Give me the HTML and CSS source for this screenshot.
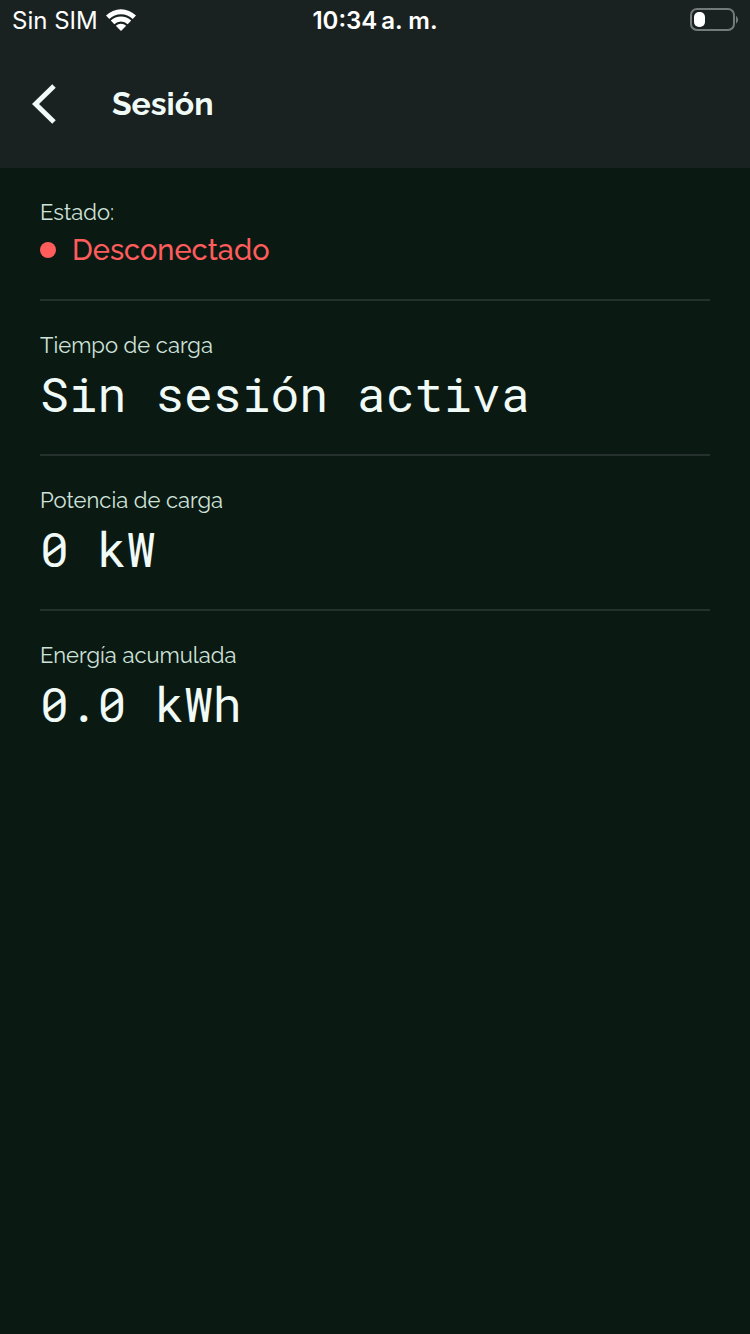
FILE: index.html
```html
<!DOCTYPE html>
<html lang="es">
<head>
  <meta charset="UTF-8">
  <meta name="viewport" content="width=device-width, initial-scale=1">
  <title>Sesión</title>
  <link rel="stylesheet" href="styles.css">
</head>
<body>
<header class="top">
  <div class="status-bar">
    <div class="carrier">
      <span>Sin SIM</span>
      <svg class="wifi" viewBox="0 0 30 22" aria-hidden="true">
        <path d="M0 6.400a21.500 21.500 0 0 1 30 0l-3.300 3.600a17 17 0 0 0-23.400 0z"/>
        <path d="M4.800 11.600a14.600 14.600 0 0 1 20.400 0l-3.500 3.600a9.700 9.700 0 0 0-13.400 0z"/>
        <path d="M9.800 16.800a7.500 7.500 0 0 1 10.400 0l-5.200 5.200z"/>
      </svg>
    </div>
    <time class="clock" datetime="10:34">10:34<span class="period">a. m.</span></time>
    <svg class="battery" viewBox="0 0 48 24" aria-hidden="true">
      <rect class="battery-case" x="1" y="1" width="43" height="21" rx="6"/>
      <rect class="battery-level" x="4" y="4" width="11" height="15" rx="5"/>
      <path class="battery-tip" d="M46 8c2.700 1.500 2.700 6 0 7.500z"/>
    </svg>
  </div>
  <nav class="app-bar">
    <button type="button" class="back" aria-label="Volver">
      <svg viewBox="0 0 24 40" aria-hidden="true"><path d="M22 2L3.500 20L22 38"/></svg>
    </button>
    <h1>Sesión</h1>
  </nav>
</header>

<main class="session">
  <section class="item">
    <h2>Estado:</h2>
    <p class="state"><span class="dot"></span>Desconectado</p>
  </section>
  <section class="item">
    <h2>Tiempo de carga</h2>
    <p class="value">Sin sesión activa</p>
  </section>
  <section class="item">
    <h2>Potencia de carga</h2>
    <p class="value">0 kW</p>
  </section>
  <section class="item">
    <h2>Energía acumulada</h2>
    <p class="value">0.0 kWh</p>
  </section>
</main>
</body>
</html>
```
FILE: styles.css
```css
* { box-sizing: border-box; }
body { margin: 0; min-height: 100vh; background: #0b1913; color: #f0faf6; font-family: Raleway, Lato, sans-serif; }
h1, h2, p { margin: 0; }

/* status bar + title */
.top { background: #1a2221; padding-bottom: 24px; }
.status-bar { display: grid; grid-template-columns: 1fr auto 1fr; align-items: center; height: 40px; padding: 0 12px; color: #fff; font-family: Inter, sans-serif; font-size: 24px; }
.carrier { display: flex; align-items: center; gap: 8px; }
.wifi { width: 30px; height: 22px; fill: #fff; }
.clock { font-weight: 600; }
.period { margin-left: 4px; }
.battery { width: 48px; height: 24px; justify-self: end; }
.battery-case { fill: none; stroke: #747979; stroke-width: 2; }
.battery-level { fill: #fff; }
.battery-tip { fill: #747979; }

.app-bar { display: flex; align-items: center; gap: 56px; height: 104px; padding: 24px 32px 0; }
.back { display: flex; padding: 0; border: 0; background: none; cursor: pointer; }
.back svg { width: 24px; height: 40px; fill: none; stroke: #f0faf6; stroke-width: 5; }
h1 { font-size: 32px; line-height: 40px; font-weight: 700; }

/* session data */
.session { padding: 0 40px; }
.item { padding: 30px 0 29px; border-bottom: 2px solid #24312c; }
.item:last-child { border-bottom: 0; }
h2 { margin-bottom: 4px; color: #cfe3da; font-size: 22px; line-height: 28px; font-weight: 450; }
.state { display: flex; align-items: center; gap: 16px; color: #ff5c5c; font-size: 29px; line-height: 40px; font-weight: 500; }
.dot { width: 16px; height: 16px; border-radius: 50%; background: #ff5c5c; }
.value { font-family: "Roboto Mono", "DejaVu Sans Mono", monospace; font-size: 48px; line-height: 62px; font-weight: 450; }
```
